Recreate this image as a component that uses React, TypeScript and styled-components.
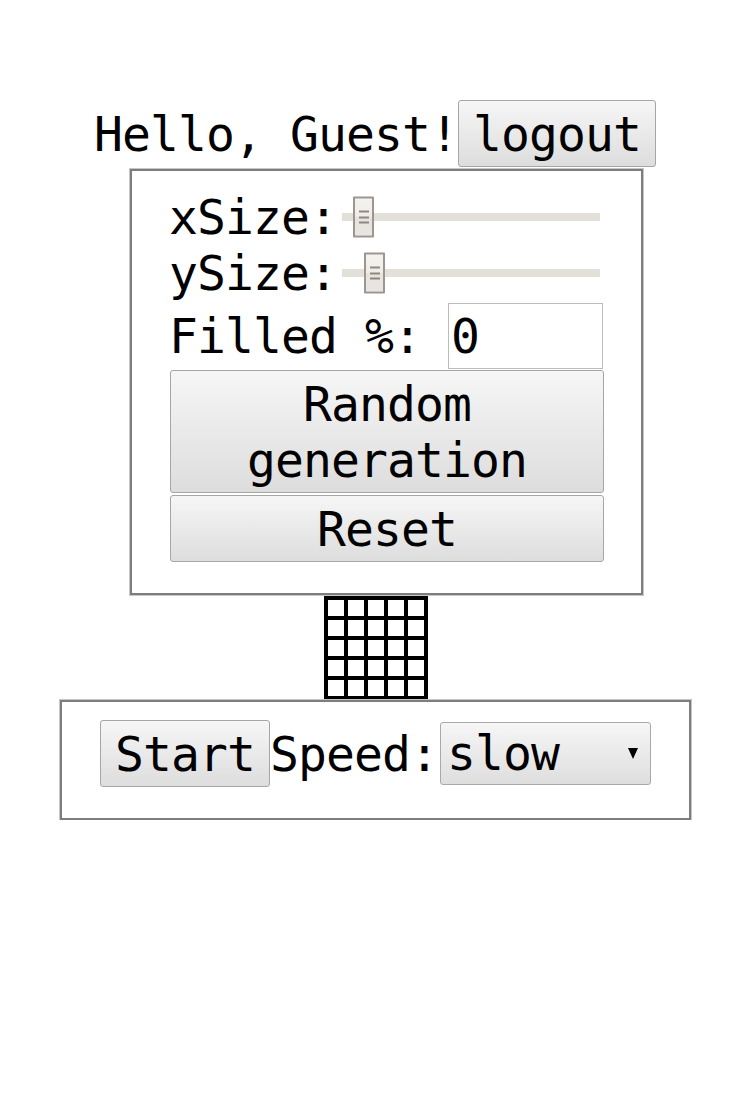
import React from "react";
import styled, { createGlobalStyle } from "styled-components";

const GlobalStyle = createGlobalStyle`
  html, body {
    margin: 0;
    padding: 0;
    background: #ffffff;
  }
  body {
    font-family: "DejaVu Sans Mono", "Liberation Mono", monospace;
    font-size: 48px;
    line-height: 56px;
    letter-spacing: -0.9px;
    color: #000000;
  }
`;

const Page = styled.div`
  display: flex;
  flex-direction: column;
  align-items: center;
  padding: 100px 0 0 16px;
  width: 734px;
  box-sizing: border-box;
`;

const Header = styled.div`
  display: flex;
  align-items: center;
  white-space: pre;
`;

const Button = styled.button<{ $wide?: boolean }>`
  font: inherit;
  letter-spacing: inherit;
  line-height: 56px;
  color: #000;
  margin: 0;
  padding: 4.5px 14px;
  border: 1px solid #a6a6a6;
  border-radius: 3px;
  background: linear-gradient(#f6f6f6, #dddddd);
  box-sizing: border-box;
  width: ${(p) => (p.$wide ? "434px" : "auto")};
  text-align: center;
  cursor: pointer;
`;

const Panel = styled.fieldset<{ $width: number; $shift?: number }>`
  box-sizing: border-box;
  width: ${(p) => p.$width}px;
  margin: 0;
  margin-left: ${(p) => (p.$shift ?? 0) * 2}px;
  border: 2px solid #7d7d7d;
  box-shadow: 0 0 0 1px #c6c6c6;
  min-inline-size: 0;
`;

const SettingsPanel = styled(Panel)`
  margin-top: 2px;
  padding: 18px 37px 31px 37px;
  display: flex;
  flex-direction: column;
`;

const ControlPanel = styled(Panel)`
  padding: 18px 38px 31px 38px;
`;

const Row = styled.div<{ $height: number }>`
  display: flex;
  align-items: center;
  height: ${(p) => p.$height}px;
  white-space: pre;
`;

const Track = styled.div`
  position: relative;
  width: 258px;
  height: 8px;
  margin-left: 5px;
  background: #e3dfd9;
`;

const Thumb = styled.div`
  position: absolute;
  top: 50%;
  transform: translateY(-50%);
  width: 21px;
  height: 41px;
  box-sizing: border-box;
  border: 2px solid #9c968f;
  border-radius: 1px;
  background: linear-gradient(#f4f2ef 0%, #efece8 50%, #e6e2dd 50%, #e9e5e0 100%);
  display: flex;
  flex-direction: column;
  align-items: center;
  justify-content: center;
  gap: 3.5px;
`;

const Grip = styled.span`
  display: block;
  width: 10px;
  height: 2px;
  background: #8f8881;
`;

const NumberInput = styled.input`
  font: inherit;
  letter-spacing: inherit;
  line-height: 56px;
  width: 155px;
  height: 66px;
  box-sizing: border-box;
  margin: 0 0 0 27px;
  padding: 4px 2px;
  border: 1px solid #bcbcbc;
  color: #000;
  background: #fff;
  outline: none;
`;

const ButtonStack = styled.div`
  display: flex;
  flex-direction: column;
  gap: 2px;
  padding-left: 1px;
`;

const Board = styled.div<{ $cols: number }>`
  display: grid;
  grid-template-columns: repeat(${(p) => p.$cols}, 16px);
  grid-auto-rows: 16px;
  gap: 4px;
  padding: 4px;
  background: #000;
  margin: 1px 0 0 2px;
`;

const Cell = styled.div<{ $alive?: boolean }>`
  background: ${(p) => (p.$alive ? "#000" : "#fff")};
`;

const ControlRow = styled.div`
  display: flex;
  align-items: center;
  height: 67px;
  white-space: pre;
`;

const SelectBox = styled.div`
  position: relative;
  width: 211px;
  height: 63px;
  box-sizing: border-box;
  border: 1px solid #a9a9a9;
  border-radius: 3px;
  background: linear-gradient(#f6f6f6, #dedede);
  padding: 0 6px;
  line-height: 61px;
  margin-left: 2px;
`;

const Arrow = styled.span`
  position: absolute;
  right: 12px;
  top: 50%;
  margin-top: -5.5px;
  width: 0;
  height: 0;
  border-left: 5.5px solid transparent;
  border-right: 5.5px solid transparent;
  border-top: 11px solid #000;
`;

function Slider({ offset }: { offset: number }) {
  return (
    <Track>
      <Thumb style={{ left: offset }}>
        <Grip />
        <Grip />
        <Grip />
      </Thumb>
    </Track>
  );
}

export default function App() {
  const cols = 5;
  const rows = 5;
  const cells = Array.from({ length: cols * rows }, (_, i) => i);
  return (
    <>
      <GlobalStyle />
      <Page>
        <Header>
          <span>Hello, Guest!</span>
          <Button>logout</Button>
        </Header>
        <SettingsPanel $width={513} $shift={11.5}>
          <Row $height={56}>
            <span>xSize:</span>
            <Slider offset={11} />
          </Row>
          <Row $height={56}>
            <span>ySize:</span>
            <Slider offset={22} />
          </Row>
          <Row $height={69}>
            <span>Filled %:</span>
            <NumberInput type="text" defaultValue="0" />
          </Row>
          <ButtonStack>
            <Button $wide>Random generation</Button>
            <Button $wide>Reset</Button>
          </ButtonStack>
        </SettingsPanel>
        <Board $cols={cols}>
          {cells.map((i) => (
            <Cell key={i} />
          ))}
        </Board>
        <ControlPanel $width={631} $shift={0.5}>
          <ControlRow>
            <Button>Start</Button>
            <span>Speed:</span>
            <SelectBox>
              slow
              <Arrow />
            </SelectBox>
          </ControlRow>
        </ControlPanel>
      </Page>
    </>
  );
}
